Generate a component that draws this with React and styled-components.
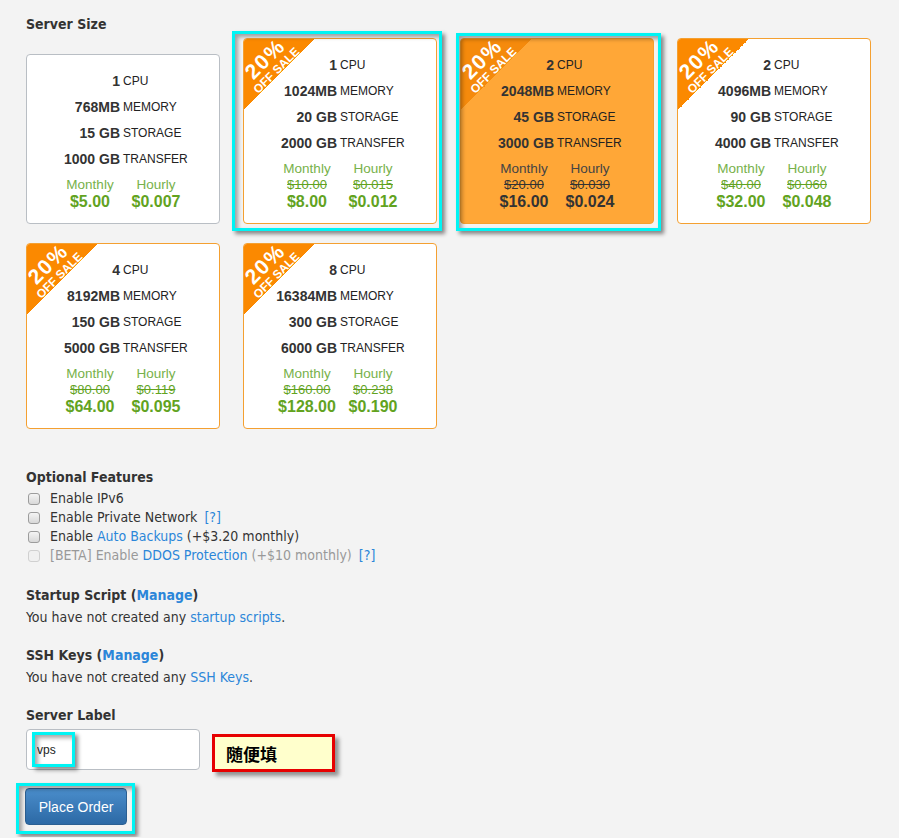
import React from "react";
import styled, { createGlobalStyle } from "styled-components";

const plans = [
  { cpu: "1", mem: "768MB", disk: "15 GB", bw: "1000 GB", monthly: "$5.00", hourly: "$0.007" },
  { cpu: "1", mem: "1024MB", disk: "20 GB", bw: "2000 GB", monthly: "$8.00", hourly: "$0.012", oldM: "$10.00", oldH: "$0.015", mark: { t: -8, r: -6, b: -8, l: -12 } },
  { cpu: "2", mem: "2048MB", disk: "45 GB", bw: "3000 GB", monthly: "$16.00", hourly: "$0.024", oldM: "$20.00", oldH: "$0.030", active: true, mark: { t: -6, r: -8, b: -8, l: -5 } },
  { cpu: "2", mem: "4096MB", disk: "90 GB", bw: "4000 GB", monthly: "$32.00", hourly: "$0.048", oldM: "$40.00", oldH: "$0.060" },
  { cpu: "4", mem: "8192MB", disk: "150 GB", bw: "5000 GB", monthly: "$64.00", hourly: "$0.095", oldM: "$80.00", oldH: "$0.119" },
  { cpu: "8", mem: "16384MB", disk: "300 GB", bw: "6000 GB", monthly: "$128.00", hourly: "$0.190", oldM: "$160.00", oldH: "$0.238" },
];

const GlobalStyle = createGlobalStyle`
  body {
    margin: 0;
    background: #f3f3f3;
    color: #333;
    font-family: "DejaVu Sans Condensed", "Liberation Sans", sans-serif;
  }
`;

const Page = styled.div`
  padding: 14px 0 0 26px;
  width: 860px;
`;

const Heading = styled.div`
  font-weight: bold;
  font-size: 14px;
  line-height: 20px;
  color: #333;
  margin-bottom: ${(p) => p.$gap ?? 3}px;
`;

const Section = styled.div`
  margin-top: ${(p) => p.$top || 18}px;
`;

const Cards = styled.div`
  display: flex;
  flex-wrap: wrap;
  align-items: flex-end;
  column-gap: 23px;
  row-gap: 19px;
  width: 850px;
`;

const Card = styled.div`
  position: relative;
  width: 194px;
  box-sizing: border-box;
  padding: 13px 0 12px;
  border: 1px solid ${(p) => (p.$sale ? "#f4a031" : "#b9bec4")};
  border-radius: 4px;
  background: ${(p) => (p.$active ? "#ffa737" : "#fff")};
  font-family: "Liberation Sans", Arial, sans-serif;
`;

const Mark = styled.span`
  position: absolute;
  top: ${(p) => p.$t}px;
  right: ${(p) => p.$r}px;
  bottom: ${(p) => p.$b}px;
  left: ${(p) => p.$l}px;
  border: 3px solid #00f4f4;
  box-shadow: 3px 3px 4px rgba(0, 0, 0, 0.45), inset 3px 3px 4px rgba(0, 0, 0, 0.35);
  pointer-events: none;
  z-index: 2;
`;

const Ribbon = styled.div`
  position: absolute;
  top: 0;
  left: 0;
  width: 71px;
  height: 71px;
  border-top-left-radius: 3px;
  background: linear-gradient(135deg, ${(p) => (p.$active ? "#f58a0c" : "#fb8900")} 50%, transparent 50%);
`;

const RibbonText = styled.div`
  position: absolute;
  left: -4px;
  top: 10px;
  width: 60px;
  text-align: center;
  color: #fff;
  font-family: "Liberation Sans", Arial, sans-serif;
  font-weight: bold;
  white-space: nowrap;
  transform: rotate(-45deg);
`;

const Pct = styled.div`
  font-size: 21px;
  line-height: 16px;
  letter-spacing: 1.5px;
`;

const Sale = styled.div`
  margin-top: 3px;
  font-size: 12px;
  line-height: 11px;
`;

const Specs = styled.div`
  position: relative;
  display: grid;
  grid-template-columns: 1fr 1fr;
  line-height: 26px;
`;

const Num = styled.span`
  text-align: right;
  padding-right: 3px;
  font-weight: bold;
  font-size: 14px;
  color: #333;
`;

const Unit = styled.span`
  font-size: 12px;
  color: #222;
`;

const Prices = styled.div`
  display: grid;
  grid-template-columns: 66px 66px;
  justify-content: center;
  text-align: center;
  margin-top: 5px;
  color: ${(p) => (p.$active ? "#333" : "#62a31f")};
`;

const Period = styled.div`
  font-size: 13.5px;
  line-height: 16px;
  color: ${(p) => (p.$active ? "#444" : "#77b14a")};
`;

const Old = styled.div`
  font-size: 13px;
  line-height: 16px;
  text-decoration: line-through;
`;

const Price = styled.div`
  font-size: 16px;
  font-weight: bold;
  line-height: 18px;
`;

const List = styled.div`
  margin-top: 2px;
`;

const Option = styled.label`
  display: flex;
  align-items: center;
  gap: 10px;
  padding-left: 2px;
  font-size: 14px;
  line-height: 19px;
  color: ${(p) => (p.$disabled ? "#999" : "#333")};
`;

const Box = styled.input`
  appearance: none;
  margin: 0;
  width: 12px;
  height: 12px;
  border: 1px solid ${(p) => (p.disabled ? "#d0d0d0" : "#9c9c9c")};
  border-radius: 3px;
  background: ${(p) => (p.disabled ? "#f0f0f0" : "linear-gradient(#f4f4f4, #d8d8d8)")};
`;

const Link = styled.a`
  color: #2b86d9;
  text-decoration: none;
  cursor: pointer;
`;

const Help = styled(Link)`
  margin-left: 3px;
`;

const Text = styled.div`
  font-size: 14px;
  line-height: 19px;
  color: #333;
`;

const LabelRow = styled.div`
  display: flex;
  align-items: flex-start;
  margin-top: 4px;
`;

const InputWrap = styled.div`
  position: relative;
  width: 174px;
  height: 41px;
`;

const Input = styled.input`
  width: 100%;
  height: 100%;
  box-sizing: border-box;
  border: 1px solid #b9bec4;
  border-radius: 4px;
  background: #fff;
  padding: 0 10px;
  font-family: "Liberation Sans", Arial, sans-serif;
  font-size: 12px;
  color: #222;
  outline: none;
`;

const Note = styled.div`
  margin: 5px 0 0 12px;
  width: 123px;
  height: 38px;
  box-sizing: border-box;
  border: 3px solid #e60000;
  background: #ffffcc;
  padding-left: 11px;
  display: flex;
  align-items: center;
  font-family: "Noto Sans CJK TC", "Noto Sans CJK SC", sans-serif;
  font-weight: bold;
  font-size: 17px;
  color: #000;
  box-shadow: 4px 4px 4px rgba(0, 0, 0, 0.4);
`;

const Button = styled.button`
  position: relative;
  display: block;
  margin: 16px 0 12px -1px;
  width: 102px;
  height: 37px;
  border: 1px solid #2b5f92;
  border-radius: 4px;
  background: linear-gradient(#4a8dcb, #2c69a5);
  color: #fff;
  font-family: "Liberation Sans", Arial, sans-serif;
  font-size: 14px;
  cursor: pointer;
`;

function PlanCard({ plan }) {
  const sale = !!plan.oldM;
  return (
    <Card $sale={sale} $active={plan.active}>
      {sale && (
        <Ribbon $active={plan.active}>
          <RibbonText>
            <Pct>20%</Pct>
            <Sale>OFF SALE</Sale>
          </RibbonText>
        </Ribbon>
      )}
      {plan.mark && <Mark $t={plan.mark.t} $r={plan.mark.r} $b={plan.mark.b} $l={plan.mark.l} />}
      <Specs>
        <Num>{plan.cpu}</Num>
        <Unit>CPU</Unit>
        <Num>{plan.mem}</Num>
        <Unit>MEMORY</Unit>
        <Num>{plan.disk}</Num>
        <Unit>STORAGE</Unit>
        <Num>{plan.bw}</Num>
        <Unit>TRANSFER</Unit>
      </Specs>
      <Prices $active={plan.active}>
        <Period $active={plan.active}>Monthly</Period>
        <Period $active={plan.active}>Hourly</Period>
        {sale && <Old>{plan.oldM}</Old>}
        {sale && <Old>{plan.oldH}</Old>}
        <Price>{plan.monthly}</Price>
        <Price>{plan.hourly}</Price>
      </Prices>
    </Card>
  );
}

export default function App() {
  return (
    <Page>
      <GlobalStyle />
      <Heading $gap={4}>Server Size</Heading>
      <Cards>
        {plans.map((p, i) => (
          <PlanCard key={i} plan={p} />
        ))}
      </Cards>

      <Section $top={38}>
        <Heading $gap={0}>Optional Features</Heading>
        <List>
          <Option>
            <Box type="checkbox" /> Enable IPv6
          </Option>
          <Option>
            <Box type="checkbox" />
            <span>
              Enable Private Network <Help>[?]</Help>
            </span>
          </Option>
          <Option>
            <Box type="checkbox" />
            <span>
              Enable <Link>Auto Backups</Link> (+$3.20 monthly)
            </span>
          </Option>
          <Option $disabled>
            <Box type="checkbox" disabled />
            <span>
              [BETA] Enable <Link>DDOS Protection</Link> (+$10 monthly) <Help>[?]</Help>
            </span>
          </Option>
        </List>
      </Section>

      <Section $top={20}>
        <Heading>
          Startup Script (<Link>Manage</Link>)
        </Heading>
        <Text>
          You have not created any <Link>startup scripts</Link>.
        </Text>
      </Section>

      <Section>
        <Heading>
          SSH Keys (<Link>Manage</Link>)
        </Heading>
        <Text>
          You have not created any <Link>SSH Keys</Link>.
        </Text>
      </Section>

      <Section>
        <Heading $gap={0}>Server Label</Heading>
        <LabelRow>
          <InputWrap>
            <Input defaultValue="vps" />
            <Mark $t={3} $l={6} $r={125} $b={3} />
          </InputWrap>
          <Note>随便填</Note>
        </LabelRow>
        <Button>
          Place Order
          <Mark $t={-6} $r={-9} $b={-10} $l={-10} />
        </Button>
      </Section>
    </Page>
  );
}
